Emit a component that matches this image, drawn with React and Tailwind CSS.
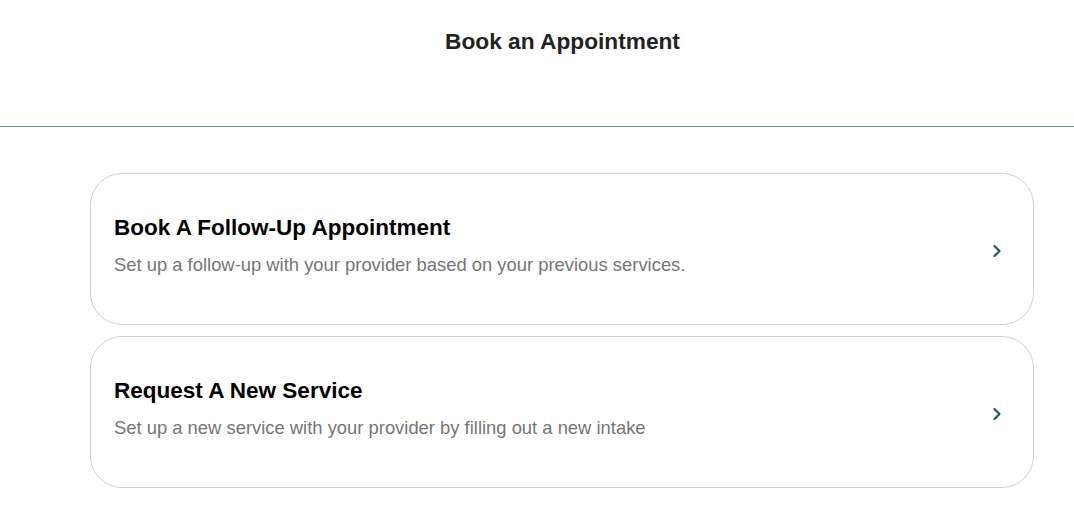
import React from 'react';

function Chevron() {
  return (
    <svg width="12" height="14" viewBox="0 0 12 14" fill="none" className="shrink-0 mt-[3px]">
      <path d="M3.5 2 L8.5 7 L3.5 12" stroke="#1d5a68" strokeWidth="2.2" strokeLinecap="round" strokeLinejoin="round" />
    </svg>
  );
}

function OptionCard({ title, desc }) {
  return (
    <div className="flex items-center justify-between h-[152px] rounded-[32px] border border-[#cfcfcf] bg-white pl-[23px] pr-[30px]">
      <div className="pb-[8px]">
        <h2 className="text-[22.5px] font-bold text-black leading-[28px]">{title}</h2>
        <p className="text-[18.4px] text-[#767676] mt-[12px] leading-[22px]">{desc}</p>
      </div>
      <Chevron />
    </div>
  );
}

export default function App() {
  return (
    <div className="min-h-[528px] bg-white" style={{ fontFamily: '"Liberation Sans", Arial, sans-serif' }}>
      <div className="h-[127px] border-b border-[#6e979f] flex justify-center pt-[27px] pl-[51px]">
        <h1 className="text-[22.7px] font-bold text-[#222] leading-[28px]">Book an Appointment</h1>
      </div>
      <div className="ml-[90px] mr-[40px] mt-[46px] flex flex-col gap-[11px]">
        <OptionCard
          title="Book A Follow-Up Appointment"
          desc="Set up a follow-up with your provider based on your previous services."
        />
        <OptionCard
          title="Request A New Service"
          desc="Set up a new service with your provider by filling out a new intake"
        />
      </div>
    </div>
  );
}
